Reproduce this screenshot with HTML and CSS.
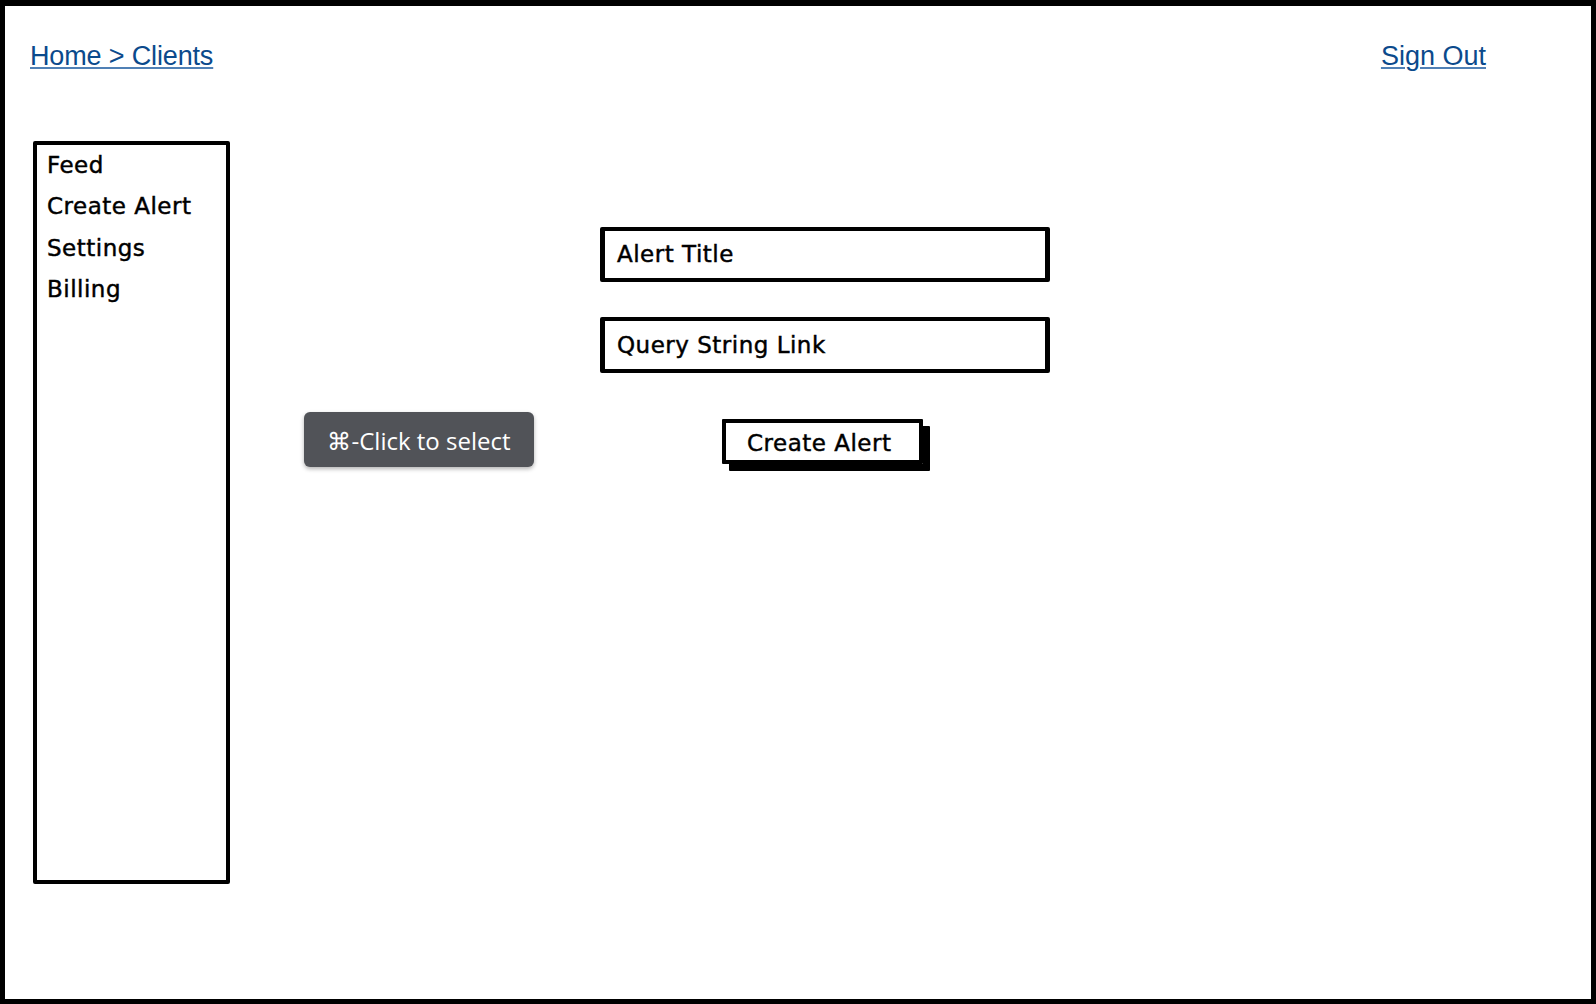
FILE: index.html
```html
<!DOCTYPE html>
<html lang="en">
<head>
<meta charset="utf-8">
<title>Create Alert</title>
<link rel="stylesheet" href="styles.css">
</head>
<body>
<div class="frame">
  <header class="topbar">
    <a class="link crumb" href="#">Home &gt; Clients</a>
    <a class="link signout" href="#">Sign Out</a>
  </header>
  <div class="page">
    <nav class="sidebar">
      <div class="nav-item">Feed</div>
      <div class="nav-item">Create Alert</div>
      <div class="nav-item">Settings</div>
      <div class="nav-item">Billing</div>
    </nav>
    <main class="content">
      <div class="tooltip">⌘-Click to select</div>
      <div class="alert-form">
        <div class="field">Alert Title</div>
        <div class="field field-query">Query String Link</div>
        <div class="button">Create Alert</div>
      </div>
    </main>
  </div>
</div>
</body>
</html>
```
FILE: styles.css
```css
html, body {
  margin: 0;
  padding: 0;
  background: #ffffff;
}

.frame {
  box-sizing: border-box;
  width: 1596px;
  height: 1004px;
  border: 5px solid #000;
  border-top-width: 6px;
  background: #fff;
  display: flex;
  flex-direction: column;
}

.topbar {
  display: flex;
  justify-content: space-between;
  align-items: flex-start;
  padding: 35px 105px 0 25px;
  height: 31px;
}

.link {
  font-family: "Liberation Sans", Arial, sans-serif;
  font-size: 27px;
  line-height: 31px;
  color: #0b4a8c;
  text-decoration: underline;
  text-decoration-color: #5080b5;
  text-decoration-thickness: 2px;
  text-underline-offset: 2px;
}

.crumb {
  letter-spacing: -0.15px;
}

.page {
  display: flex;
  margin-top: 69px;
  flex: 1;
}

.sidebar {
  box-sizing: border-box;
  width: 197px;
  height: 743px;
  margin-left: 28px;
  border: 4px solid #000;
  border-radius: 2px;
  padding: 0 0 0 10px;
}

.nav-item,
.field,
.button {
  font-family: "DejaVu Sans", sans-serif;
  font-size: 23px;
  letter-spacing: 0.5px;
  color: #000;
  -webkit-text-stroke: 0.45px #000;
}

.nav-item {
  line-height: 41.4px;
}

.content {
  position: relative;
  flex: 1;
  padding: 86px 0 0 370px;
}

.tooltip {
  position: absolute;
  left: 74px;
  top: 271px;
  width: 230px;
  height: 55px;
  box-sizing: border-box;
  border-radius: 6px;
  background: #515358;
  color: #fff;
  font-family: "Open Sans", sans-serif;
  font-size: 24px;
  padding-top: 1px;
  display: flex;
  align-items: center;
  justify-content: center;
  box-shadow: 0 2px 4px rgba(0, 0, 0, 0.3);
}

.alert-form {
  width: 450px;
  display: flex;
  flex-direction: column;
}

.field {
  box-sizing: border-box;
  width: 450px;
  height: 55px;
  border: 4px solid #000;
  border-left-width: 5px;
  border-right-width: 5px;
  border-radius: 2px;
  padding-left: 12px;
  display: flex;
  align-items: center;
  line-height: 27px;
}

.field-query {
  margin-top: 35px;
  height: 56px;
}

.button {
  box-sizing: border-box;
  margin-top: 46px;
  margin-left: 122px;
  width: 201px;
  height: 45px;
  border: 4px solid #000;
  border-radius: 1px;
  box-shadow: 7px 7px 0 #000;
  padding: 7px 0 2px 21px;
  line-height: 27px;
}
```
